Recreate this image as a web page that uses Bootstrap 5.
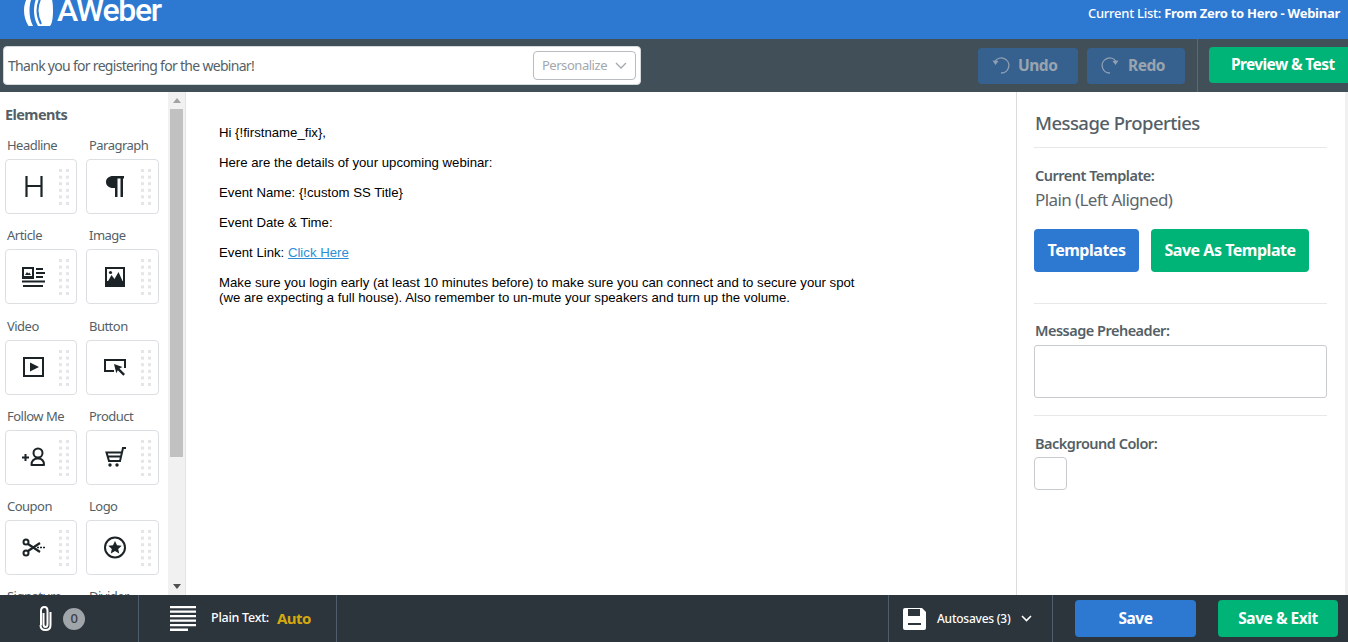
<!DOCTYPE html>
<html lang="en"><head><meta charset="utf-8"><title>AWeber</title>
<link href="https://cdn.jsdelivr.net/npm/bootstrap@5.3.0/dist/css/bootstrap.min.css" rel="stylesheet">
<style>
html,body{height:642px;overflow:hidden}
body{font-family:"Noto Sans","Liberation Sans",sans-serif;letter-spacing:-.035em;color:#555f67;width:1348px}
.aw-head{height:39px;background:#2d78d1;color:#fff;flex:none;overflow:hidden}
.aw-logo{padding-left:24px;height:39px;margin-top:-9px}
.aw-logo-text{font:500 32px/31px "Roboto",sans-serif;letter-spacing:-.04em;margin-left:4px}
.aw-list{font-size:13px;padding-right:8px;padding-top:4px;letter-spacing:-.02em;font-weight:500}
.aw-list b{font-weight:700}
.aw-tool{height:53px;background:#414f59;flex:none}
.aw-subject{width:638px;height:39px;margin:7px 0 0 3px;border:1px solid #d5d8da;border-radius:4px;background:#fff;padding:0 4px 0 4px;font-size:14px;letter-spacing:-.05em}
.aw-person{width:103px;height:29px;border:1px solid #b9bdc1;border-radius:4px;color:#a3a8ad;font-size:13px;gap:8px;letter-spacing:-.035em}
.aw-ghost{height:36px;margin-top:9px;background:#36618f;color:#9aa4ae;border-radius:4px;font-weight:700;font-size:15.5px;gap:8px;letter-spacing:-.03em}
.aw-undo{width:100px;margin-left:auto;padding-left:13px}.aw-redo{width:98px;margin-left:9px;padding-left:14px}
.aw-sep{width:1px;background:#5e6a73;margin-left:12px}
.aw-preview{width:139px;height:36px;margin:8px 0 0 11px;background:#00b377;color:#fff;font-weight:700;font-size:15.5px;border-radius:4px 0 0 4px;padding:0 0 0 22px;white-space:nowrap;letter-spacing:-.04em}
.aw-main{flex:1 1 auto;min-height:0;overflow:hidden}
.aw-side{width:186px;flex:none;border-right:1px solid #e4e4e4}
.aw-els{width:168px;padding:13px 0 0 5px;overflow:hidden}
.aw-els h2{font-size:14.5px;font-weight:700;margin:0 0 13px;line-height:18px;color:#555f67;letter-spacing:-.04em}
.aw-grid{display:grid;grid-template-columns:72px 73px;column-gap:9px;row-gap:0}
.aw-cell{height:90.3px}
.aw-lbl{display:block;font-size:13px;line-height:18px;padding-left:2px;margin-bottom:5px;white-space:nowrap;letter-spacing:-.04em}
.aw-cell:nth-child(even) .aw-lbl{padding-left:3px}
.aw-tile{height:55px;border:1px solid #dcdfe1;border-radius:4px;background:#fff;position:relative}
.aw-tile .aw-ico{position:absolute;left:13px;top:12px;width:30px;height:30px;color:#1b2327}
.aw-tile .aw-grip{position:absolute;right:7px;top:9px;width:10px;height:36px;color:#e3e5e6}
.aw-bar{width:17px;background:#f1f1f1;flex:none;padding:0 2px}
.aw-arrow{height:17px;color:#a3a3a3}
.aw-thumb{height:348px;background:#c1c1c1}
.aw-page{width:830px;flex:none;padding:33px 0 0 33px;font:13.2px/15px "Liberation Sans",Arial,sans-serif;letter-spacing:0;color:#000}
.aw-page p{margin:0 0 15px;max-width:645px}
.aw-page a{color:#2d8ed6}
.aw-props{flex:1 1 auto;border-left:1px solid #dcdcdc;padding:18px 18px 0 17px;border-right:3px solid #f0f0f0}
.aw-props h3{font-size:18.5px;line-height:26px;font-weight:500;margin:0;padding-bottom:11px;border-bottom:1px solid #e8e8e8;color:#555f67;letter-spacing:-.03em;padding-left:1px}
.aw-t{font-size:14.5px;font-weight:600;line-height:18px;color:#555f67;letter-spacing:-.035em;padding-left:1px}
.aw-v{font-size:17px;line-height:24px;color:#5c666e;margin-top:4px;padding-left:1px;letter-spacing:-.035em}
.aw-btn{height:43px;border-radius:4px;color:#fff;font-weight:700;font-size:16px;letter-spacing:-.03em;white-space:nowrap;padding-bottom:2px}
.aw-blue{background:#2d78d1}.aw-green{background:#00b377}
.aw-hr{height:1px;background:#e8e8e8}
.aw-ta{height:53px;border:1px solid #c8cbce;border-radius:3px;margin-top:6px}
.aw-sw{width:33px;height:33px;border:1px solid #c8cbce;border-radius:4px;margin-top:5px}
.aw-foot{height:47px;background:#2c343c;color:#fff;flex:none;position:relative;z-index:2}
.aw-fs{height:47px;border-right:1px solid #4d5d6c}
.aw-zero{width:22px;height:22px;border-radius:50%;background:#a0a5aa;color:#3a3f47;font-size:13px;font-weight:500;margin-left:10px}
.aw-auto{color:#d4a90f;font-weight:700;font-size:15px;margin-left:8px}
.aw-small{font-size:12.5px;font-weight:500;letter-spacing:-.02em}
.aw-small-b{font-size:12px}
.aw-fbtn{height:37px;margin-top:5px;border-radius:4px;font-size:15.5px;font-weight:700;letter-spacing:-.03em}
</style></head><body class="d-flex flex-column">
<svg width="0" height="0" class="position-absolute"><defs>
<symbol id="grip" viewBox="0 0 10 36"><g fill="currentColor"><rect x="0" y="0" width="3" height="3"/><rect x="7" y="0" width="3" height="3"/><rect x="0" y="6.6" width="3" height="3"/><rect x="7" y="6.6" width="3" height="3"/><rect x="0" y="13.2" width="3" height="3"/><rect x="7" y="13.2" width="3" height="3"/><rect x="0" y="19.8" width="3" height="3"/><rect x="7" y="19.8" width="3" height="3"/><rect x="0" y="26.4" width="3" height="3"/><rect x="7" y="26.4" width="3" height="3"/><rect x="0" y="33" width="3" height="3"/><rect x="7" y="33" width="3" height="3"/></g></symbol>
</defs></svg>

<header class="aw-head d-flex justify-content-between">
  <div class="aw-logo d-flex align-items-center">
    <svg width="29" height="31" viewBox="0 0 29 31" fill="#fff"><path d="M5 0h4C6.500 5 5.500 10 5.500 15.500S6.500 26 9 31H4.500C1.500 26 0 21 0 15.500S1.500 5 5 0z"/><path d="M14 0h12c2 2 3 8 3 15.500S28 29 26 31H14C11 26 10 21 10 15.500S11 5 14 0z"/><path d="M17 2c-2 4-3.500 9-3.500 13.500S15 25 17 29" fill="none" stroke="#2d78d1" stroke-width="2"/></svg>
    <span class="aw-logo-text">AWeber</span>
  </div>
  <div class="aw-list">Current List: <b>From Zero to Hero - Webinar</b></div>
</header>

<div class="aw-tool d-flex">
  <div class="aw-subject d-flex align-items-center justify-content-between">
    <span>Thank you for registering for the webinar!</span>
    <span class="aw-person d-flex align-items-center justify-content-center">Personalize
      <svg width="12" height="8" viewBox="0 0 12 8" fill="none" stroke="#a3a8ad" stroke-width="1.300"><path d="M1 1l5 5 5-5"/></svg></span>
  </div>
  <div class="aw-ghost aw-undo d-flex align-items-center">
    <svg width="19" height="18" viewBox="0 0 19 18" fill="none" stroke="#8fa0b3" stroke-width="1.300"><path d="M4 4.500A7.500 7.500 0 1 1 10 16"/><path d="M1.500 3.500L4.500 8 7.500 4z" fill="#8fa0b3" stroke="none"/></svg><span>Undo</span></div>
  <div class="aw-ghost aw-redo d-flex align-items-center">
    <svg width="19" height="18" viewBox="0 0 19 18" fill="none" stroke="#8fa0b3" stroke-width="1.300"><path d="M15 4.500A7.500 7.500 0 1 0 9 16"/><path d="M17.500 3.500L14.500 8 11.500 4z" fill="#8fa0b3" stroke="none"/></svg><span>Redo</span></div>
  <div class="aw-sep"></div>
  <div class="aw-preview d-flex align-items-center">Preview &amp; Test</div>
</div>

<main class="aw-main d-flex">
  <aside class="aw-side d-flex">
    <div class="aw-els">
      <h2>Elements</h2>
      <div class="aw-grid">
        <div class="aw-cell"><span class="aw-lbl">Headline</span><div class="aw-tile"><svg class="aw-ico" viewBox="0 0 30 30" fill="none" stroke="currentColor" stroke-width="2.200"><path d="M7.500 4v21M22.500 4v21M7.500 14h15"/></svg><svg class="aw-grip"><use href="#grip"/></svg></div></div>
        <div class="aw-cell"><span class="aw-lbl">Paragraph</span><div class="aw-tile"><svg class="aw-ico" viewBox="0 0 30 30" fill="currentColor"><path d="M24 4H13C9 4 6 6.500 6 10s3 6 7 6h2v9h2.500V6.500h3V25H23V6.500h1z"/></svg><svg class="aw-grip"><use href="#grip"/></svg></div></div>
        <div class="aw-cell"><span class="aw-lbl">Article</span><div class="aw-tile"><svg class="aw-ico" viewBox="0 0 30 30" fill="currentColor"><path fill-rule="evenodd" d="M3 5h12v12H3zM5 7v7h8V7z"/><path d="M6 13l2-3 1.200 1.500 1-1 1.800 2.500z"/><path d="M17 6h7v2h-7zM17 10h9v2h-9zM17 14h7v2h-7zM3 18.500h23v2H3zM4 23h20v2H4z"/></svg><svg class="aw-grip"><use href="#grip"/></svg></div></div>
        <div class="aw-cell"><span class="aw-lbl">Image</span><div class="aw-tile"><svg class="aw-ico" viewBox="0 0 30 30"><path fill="currentColor" d="M5 5h20v20H5z"/><path fill="#fff" d="M7 7h16v12H7z"/><circle cx="10.500" cy="10.500" r="1.600" fill="currentColor"/><path fill="currentColor" d="M7 21l4.500-8 3 4 4-7 4.500 10v2H7z"/></svg><svg class="aw-grip"><use href="#grip"/></svg></div></div>
        <div class="aw-cell"><span class="aw-lbl">Video</span><div class="aw-tile"><svg class="aw-ico" viewBox="0 0 30 30"><rect x="5" y="5" width="19" height="18" fill="none" stroke="currentColor" stroke-width="2"/><path fill="currentColor" d="M11 9.500l9 4.500-9 4.500z"/></svg><svg class="aw-grip"><use href="#grip"/></svg></div></div>
        <div class="aw-cell"><span class="aw-lbl">Button</span><div class="aw-tile"><svg class="aw-ico" viewBox="0 0 30 30"><path fill="none" stroke="currentColor" stroke-width="2" d="M14 18H5V7h20v8"/><path fill="currentColor" d="M14 11l8.500 3-3 1.500 5.500 5.500-1.700 1.700-5.500-5.500-1.500 3z"/></svg><svg class="aw-grip"><use href="#grip"/></svg></div></div>
        <div class="aw-cell"><span class="aw-lbl">Follow Me</span><div class="aw-tile"><svg class="aw-ico" viewBox="0 0 30 30" fill="none" stroke="currentColor" stroke-width="2"><circle cx="19" cy="10" r="4.500"/><path d="M12.500 22c0-4 2.500-6.500 6.500-6.500s6 2.500 6 6.500z" stroke-linejoin="round"/><path d="M3 14.500h7M6.500 11v7"/></svg><svg class="aw-grip"><use href="#grip"/></svg></div></div>
        <div class="aw-cell"><span class="aw-lbl">Product</span><div class="aw-tile"><svg class="aw-ico" viewBox="0 0 30 30" fill="none" stroke="currentColor" stroke-width="2"><path d="M26 5h-3l-3 13H9L6.500 9.500h15M7.500 13.500h13"/><circle cx="10" cy="22" r="1.700" fill="currentColor" stroke="none"/><circle cx="17" cy="22" r="1.700" fill="currentColor" stroke="none"/></svg><svg class="aw-grip"><use href="#grip"/></svg></div></div>
        <div class="aw-cell"><span class="aw-lbl">Coupon</span><div class="aw-tile"><svg class="aw-ico" viewBox="0 0 30 30" fill="none" stroke="currentColor" stroke-width="2"><circle cx="7" cy="9" r="2.500"/><circle cx="7" cy="20" r="2.500"/><path d="M9 11l12 8M9 18l12-8" stroke-width="2.200"/><path d="M18 14.500h8" stroke-width="1.300" stroke-dasharray="2 1"/></svg><svg class="aw-grip"><use href="#grip"/></svg></div></div>
        <div class="aw-cell"><span class="aw-lbl">Logo</span><div class="aw-tile"><svg class="aw-ico" viewBox="0 0 30 30"><circle cx="15" cy="14.500" r="10" fill="none" stroke="currentColor" stroke-width="2"/><path fill="currentColor" d="M15 8l2 4.300 4.700.5-3.500 3.100 1 4.600-4.200-2.400-4.200 2.400 1-4.600-3.500-3.100 4.700-.5z"/></svg><svg class="aw-grip"><use href="#grip"/></svg></div></div>
        <div class="aw-cell"><span class="aw-lbl">Signature</span></div>
        <div class="aw-cell"><span class="aw-lbl">Divider</span></div>
      </div>
    </div>
    <div class="aw-bar d-flex flex-column">
      <div class="aw-arrow d-flex align-items-center justify-content-center"><svg width="8" height="5" viewBox="0 0 8 5" fill="currentColor"><path d="M4 0l4 5H0z"/></svg></div>
      <div class="aw-thumb"></div>
      <div class="aw-arrow d-flex align-items-center justify-content-center mt-auto"><svg width="8" height="5" viewBox="0 0 8 5" fill="#505050"><path d="M0 0h8L4 5z"/></svg></div>
    </div>
  </aside>
  <section class="aw-page">
    <p>Hi {!firstname_fix},</p>
    <p>Here are the details of your upcoming webinar:</p>
    <p>Event Name: {!custom SS Title}</p>
    <p>Event Date &amp; Time:</p>
    <p>Event Link: <a href="#">Click Here</a></p>
    <p>Make sure you login early (at least 10 minutes before) to make sure you can connect and to secure your spot (we are expecting a full house). Also remember to un-mute your speakers and turn up the volume.</p>
  </section>
  <aside class="aw-props">
    <h3>Message Properties</h3>
    <div class="aw-t" style="margin-top:18px">Current Template:</div>
    <div class="aw-v">Plain (Left Aligned)</div>
    <div class="d-flex" style="gap:12px;margin-top:17px">
      <div class="aw-btn aw-blue d-flex align-items-center justify-content-center" style="width:105px">Templates</div>
      <div class="aw-btn aw-green d-flex align-items-center justify-content-center" style="width:158px">Save As Template</div>
    </div>
    <div class="aw-hr" style="margin-top:31px"></div>
    <div class="aw-t" style="margin-top:17px">Message Preheader:</div>
    <div class="aw-ta"></div>
    <div class="aw-hr" style="margin-top:17px"></div>
    <div class="aw-t" style="margin-top:18px">Background Color:</div>
    <div class="aw-sw"></div>
  </aside>
</main>

<footer class="aw-foot d-flex">
  <div class="aw-fs d-flex align-items-center" style="width:139px;padding-left:37px">
    <svg width="16" height="25" viewBox="0 0 16 25" fill="none" stroke="#fff" stroke-width="2"><path d="M6.500 7v11c0 2 .7 3 2 3s2-1 2-3V5c0-2.500-1-4-3-4S4 2.500 4 5v14"/><path d="M13.500 6v13c0 3.500-2 5-5 5s-5-1.500-5-5"/></svg>
    <span class="aw-zero d-flex align-items-center justify-content-center">0</span>
  </div>
  <div class="aw-fs d-flex align-items-center" style="width:198px;padding-left:31px">
    <svg width="26" height="25" viewBox="0 0 26 25" fill="#fff"><path d="M0 0h26v2.200H0zM0 4.500h26v2.200H0zM0 9h26v2.200H0zM0 13.500h26v2.200H0zM0 18h26v2.200H0zM0 22.500h18V25H0z"/></svg>
    <span class="aw-small" style="margin-left:15px">Plain Text:</span><span class="aw-auto">Auto</span>
  </div>
  <div class="aw-fs d-flex align-items-center ms-auto" style="width:165px;border-left:1px solid #4d5d6c;padding-left:14px;margin-right:22px">
    <svg width="23" height="22" viewBox="0 0 23 22"><path fill="#fff" d="M2 0h17l4 4v16a2 2 0 0 1-2 2H2a2 2 0 0 1-2-2V2a2 2 0 0 1 2-2z"/><path fill="#2c343c" d="M5 1h12v7H5zM5 15h13v2H5z"/></svg>
    <span class="aw-small aw-small-b" style="margin-left:11px;margin-right:11px">Autosaves (3)</span>
    <svg width="11" height="7" viewBox="0 0 11 7" fill="none" stroke="#fff" stroke-width="1.600"><path d="M1 1l4.500 4.500L10 1"/></svg>
  </div>
  <div class="aw-fbtn aw-blue d-flex align-items-center justify-content-center" style="width:121px">Save</div>
  <div class="aw-fbtn aw-green d-flex align-items-center justify-content-center" style="width:120px;margin:5px 10px 0 22px">Save &amp; Exit</div>
</footer>
</body></html>
